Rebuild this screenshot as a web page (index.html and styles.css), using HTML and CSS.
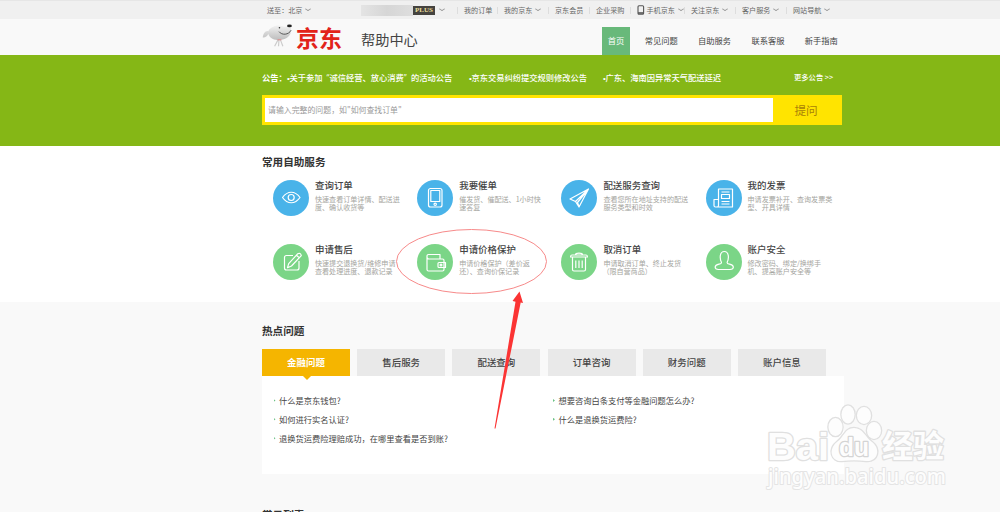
FILE: index.html
```html
<!DOCTYPE html>
<html lang="zh-CN">
<head>
<meta charset="utf-8">
<title>京东帮助中心</title>
<link rel="stylesheet" href="styles.css">
</head>
<body>
<div class="page">
  <div class="topbar">
    <div class="ship">送至：北京<i class="chev"></i></div>
    <div class="user"><span class="mask"></span><span class="plus">PLUS</span><i class="chev"></i></div>
    <ul class="toplinks">
      <li class="l1">我的订单</li>
      <li class="l2">我的京东<i class="chev"></i></li>
      <li class="l3">京东会员</li>
      <li class="l4">企业采购</li>
      <li class="l5"><svg class="phone" viewBox="0 0 8 10"><rect x="1" y=".7" width="5.6" height="8.6" rx="1" fill="none" stroke="#555" stroke-width="1.1"/><path d="M1 8h5.6" stroke="#555" stroke-width="1.6"/></svg>手机京东<i class="chev"></i></li>
      <li class="l6">关注京东<i class="chev"></i></li>
      <li class="l7">客户服务<i class="chev"></i></li>
      <li class="l8">网站导航<i class="chev"></i></li>
    </ul>
  </div>
  <header class="header">
    <svg class="dog" viewBox="0 0 34 26">
      <defs><linearGradient id="fur" x1="0" y1="0" x2="0" y2="1"><stop offset="0" stop-color="#f1f1f1"/><stop offset="1" stop-color="#bdbdbd"/></linearGradient></defs>
      <path d="M6.500 8C3.500 7 1 11 .8 14.500c2.700.2 4.500-1 5.700-3.500C8 15 12 17.500 17 17c6 0 11-2 12.500-7l.5-6C27 1.500 24 4.500 21 3 17 1 9 3 6.500 8z" fill="url(#fur)"/>
      <path d="M16.500 17l-3.500 6.500M19 17l2.500 6.500M17.500 17l-.5 6.500" stroke="#ccc" stroke-width="1.200" fill="none"/>
      <path d="M16 16.900h4" stroke="#d88" stroke-width="1"/>
      <path d="M17.500 8.500c3 4 10 3.500 12.500-1.500" stroke="#555" stroke-width="1" fill="none"/>
      <ellipse cx="28.300" cy="2.600" rx="2.500" ry="1.400" fill="#222"/><circle cx="18" cy="4.600" r=".8" fill="#333"/>
    </svg>
    <span class="brand">京东</span>
    <h1 class="title">帮助中心</h1>
    <nav class="nav"><a class="on">首页</a><a>常见问题</a><a>自助服务</a><a>联系客服</a><a>新手指南</a></nav>
  </header>
  <section class="hero">
    <div class="notice"><b>公告：</b><span class="n1"><i class="dot">•</i>关于参加<q class="lq">“</q>诚信经营、放心消费<q class="rq">”</q>的活动公告</span><span class="n2"><i class="dot">•</i>京东交易纠纷提交规则修改公告</span><span class="n3"><i class="dot">•</i>广东、海南因异常天气配送延迟</span><span class="more">更多公告 &gt;&gt;</span></div>
    <div class="search"><div class="input">请输入完整的问题，如"如何查找订单"</div><div class="ask">提问</div></div>
  </section>
  <section class="services">
    <h2 class="heading">常用自助服务</h2>
    <div class="grid">
      <div class="card"><svg class="icon blue" viewBox="0 0 36 36"><path d="M9.500 17.500c5-7 12.500-7 17.500 0-5 7-12.500 7-17.500 0z"/><circle cx="18.200" cy="17.500" r="3"/></svg><div><h3>查询订单</h3><p>快速查看订单详情、配送进<br>度、确认收货等</p></div></div>
      <div class="card"><svg class="icon blue" viewBox="0 0 36 36"><rect x="11.500" y="8.500" width="13.500" height="18.500" rx="2"/><path d="M13.800 10.500h9v11h-9z"/><circle cx="18.200" cy="24.300" r="1.200"/></svg><div><h3>我要催单</h3><p>催发货、催配送、1小时快<br>速答复</p></div></div>
      <div class="card"><svg class="icon blue" viewBox="0 0 36 36"><path d="M27.500 9L9 19l5.500 2.500 3.500 5.500zM27.500 9l-13 12.500M27.500 9L16.500 22.500l1.500 4"/></svg><div><h3>配送服务查询</h3><p>查看您所在地址支持的配送<br>服务类型和时效</p></div></div>
      <div class="card"><svg class="icon blue" viewBox="0 0 36 36"><path d="M12.500 9h14v18h-17q-1.500 0-1.500-1.500v-6h4.500zM12.500 19.500v6q0 1.500-1.500 1.500M15.500 12h8M15.500 14.500h8v4h-8zM15.500 21.500h8M15.500 24h8"/></svg><div><h3>我的发票</h3><p>申请发票补开、查询发票类<br>型、开具详情</p></div></div>
      <div class="card"><svg class="icon green" viewBox="0 0 36 36"><path d="M20 11.500h-6.500q-2 0-2 2v10.500q0 2 2 2h10.500q2 0 2-2v-7M24.800 9.700q2.700-1.200 3.500 2L18.500 22l-4 1.700 1.200-4zM23.500 11.200l2.900 2.700"/></svg><div><h3>申请售后</h3><p>快速提交退换货/维修申请<br>查看处理进度、退款记录</p></div></div>
      <div class="card"><svg class="icon green" viewBox="0 0 36 36"><path d="M10 12.500v13q0 1.500 1.500 1.500h14q1.500 0 1.500-1.500v-9q0-1.500-1.500-1.500H12q-2 0-2-2v-1q0-1.500 1.500-1.500H23V15M28.500 18.500H22q-1 0-1 1v3q0 1 1 1h6.500z"/><circle cx="24" cy="21" r=".9"/></svg><div><h3>申请价格保护</h3><p>申请价格保护（差价返<br>还）、查询价保记录</p></div></div>
      <div class="card"><svg class="icon green" viewBox="0 0 36 36"><path d="M9.500 13q0-2 1.500-2h14q1.500 0 1.500 2zM14.500 11q0-1.800 3.500-1.800t3.500 1.800M11.500 13v12.500q0 1.500 1.500 1.500h10q1.500 0 1.500-1.500V13M14.800 16.500v7.500M18 16.500v7.500M21.200 16.500v7.500"/></svg><div><h3>取消订单</h3><p>申请取消订单、终止发货<br><span class="limit">（限自营商品）</span></p></div></div>
      <div class="card"><svg class="icon green" viewBox="0 0 36 36"><path d="M15.500 18.500c-2-4-2-11 2.800-11s4.800 7 2.800 11q0 1.200 2.400 1.700c5 1 5 4.800.5 5.300h-11.500c-4.500-.5-4.500-4.300.5-5.300q2.500-.5 2.500-1.700z"/></svg><div><h3>账户安全</h3><p>修改密码、绑定/换绑手<br>机、提高账户安全等</p></div></div>
    </div>
  </section>
  <section class="hot">
    <h2 class="heading">热点问题</h2>
    <div class="tabs"><div class="tab active">金融问题</div><div class="tab">售后服务</div><div class="tab">配送查询</div><div class="tab">订单咨询</div><div class="tab">财务问题</div><div class="tab">账户信息</div></div>
    <div class="panel">
      <ul><li>什么是京东钱包?</li><li>如何进行实名认证?</li><li>退换货运费险理赔成功，在哪里查看是否到账?</li></ul>
      <ul><li>想要咨询白条支付等金融问题怎么办?</li><li>什么是退换货运费险?</li></ul>
    </div>
    <h2 class="heading last">常见列表</h2>
  </section>
  <svg class="overlay" viewBox="0 0 1000 512">
    <ellipse cx="471.500" cy="261.500" rx="75" ry="32" fill="none" stroke="#f78a8a" stroke-width="1"/>
    <path d="M519.500 291.500L523 303l-2.300-.5L495.500 428.500h-1L515.500 301.700l-3-.6z" fill="#fb3434"/>
    <g class="mark">
      <text x="767" y="460" font-size="39" textLength="62" lengthAdjust="spacingAndGlyphs" font-weight="700">Bai</text>
      <ellipse cx="835.500" cy="427" rx="7" ry="9"/><ellipse cx="848" cy="414.500" rx="6.500" ry="9"/><ellipse cx="864" cy="415.500" rx="7" ry="8.500"/><ellipse cx="874" cy="430.500" rx="7" ry="8.500"/>
      <path d="M854 428c-9 0-10 9-17 14-9 7-6 20 5 19 8-1 16-1 24 0 12 1 15-12 6-19-7-5-9-14-18-14z"/>
      <text x="839" y="456" font-size="25" textLength="30" lengthAdjust="spacingAndGlyphs" font-weight="700" class="du">du</text>
      <text x="882" y="457" font-size="31" textLength="62" lengthAdjust="spacingAndGlyphs" font-weight="700" class="cn">经验</text>
      <text x="768" y="484" font-size="21" textLength="178" lengthAdjust="spacingAndGlyphs" class="url">jingyan.baidu.com</text>
    </g>
  </svg>
</div>
</body>
</html>
```
FILE: styles.css
```css
* { box-sizing: border-box; }
body { margin: 0; font-family: "Noto Sans CJK SC", sans-serif; color: #555; background: #f9f9f9; }
h1, h2, h3, p, ul { margin: 0; padding: 0; font-weight: 400; }
ul { list-style: none; }
.page { position: relative; width: 1000px; height: 512px; overflow: hidden; white-space: nowrap; }

.topbar { height: 19px; background: #f0f0f0; border-top: 1px solid #e6e6e6; padding-left: 267px; display: flex; align-items: center; font-size: 7.1px; line-height: 18px; color: #666; }
.topbar > * { flex: none; }
.ship { width: 94px; }
.user { width: 96px; display: flex; align-items: center; }
.mask { width: 52px; height: 11px; background: linear-gradient(90deg, #e4e4e4, #d6d6d6 50%, #dedede); }
.plus { width: 22px; height: 9px; background: #45433f; color: #eadf9b; font: bold 7px/9px "Liberation Serif", serif; text-align: center; }
.user .chev { margin-left: 5px; }
.chev { display: inline-block; width: 4px; height: 4px; border: solid #999; border-width: 0 .8px .8px 0; transform: scale(1.1, .75) rotate(45deg); margin: 0 0 2px 4px; }
.toplinks { display: flex; }
.toplinks li { padding-left: 6px; border-left: 1px solid #ddd; height: 7px; line-height: 7px; }
.l1 { width: 40px; } .l2 { width: 51px; } .l3 { width: 41px; } .l4 { width: 41px; } .l5 { width: 54px; } .l6 { width: 51px; } .l7 { width: 51px; } .l8 { width: 55px; }
.toplinks .l5 { padding-left: 6px; }
.phone { width: 8px; height: 10px; margin: -3px 1.500px -2px 0; }

.header { height: 36px; background: #f9f9f9; display: flex; padding-left: 262px; }
.dog { width: 33px; height: 26px; margin-top: 4px; }
.brand { width: 65px; margin-left: 1px; padding-top: 4px; font-size: 23px; line-height: 28px; font-weight: 700; color: #e2231a; }
.title { width: 241px; font-size: 14.2px; line-height: 40px; color: #444; }
.nav { display: flex; align-items: flex-end; font-size: 8.25px; line-height: 27px; color: #444; }
.nav a { width: 53.4px; height: 28px; text-align: center; }
.nav .on { width: 28px; margin-right: 4.500px; background: #68b97a; color: #fff; }

.hero { height: 91px; background: #85b716; padding: 14px 0 0 262px; }
.notice { display: flex; height: 16px; line-height: 16px; font-size: 8.25px; color: #fff; font-weight: 500; }
.notice b { width: 25px; }
.n1 { width: 182px; } .n2 { width: 134px; } .n3 { width: 191px; }
.dot { display: inline-block; width: 2.500px; font: 8px/8px "Liberation Sans", sans-serif; }
q { quotes: none; font-family: "Open Sans", sans-serif; }
.lq { margin-left: 4px; }
.rq { margin-right: 4.500px; }
.more { font-size: 7.3px; }
.search { margin-top: 10px; width: 580px; height: 30px; background: #ffe400; padding: 3px; display: flex; }
.input { width: 508px; height: 24px; background: #fff; padding-left: 3px; font-size: 7.9px; line-height: 23px; color: #999; }
.ask { flex: 1; text-align: center; font-size: 11.6px; line-height: 25px; color: #a88208; }

.services { height: 156px; background: #fff; padding: 7px 0 0 262px; }
.heading { font-size: 10.6px; line-height: 18px; font-weight: 700; color: #333; }
.grid { display: grid; grid-template-columns: repeat(4, 144.2px); grid-auto-rows: 64px; padding: 9px 0 0 11px; }
.card { display: flex; gap: 6px; }
.icon { flex: none; width: 36px; height: 36px; border-radius: 50%; fill: none; stroke: #fff; stroke-width: 1.2; stroke-linejoin: round; margin-top: -.5px; }
.blue { background: #49b3e9; }
.green { background: #7bd587; }
.card h3 { font-size: 9.45px; line-height: 14px; height: 17px; margin-top: -2.500px; font-weight: 500; color: #444; }
.card p { font-size: 7.07px; line-height: 8.400px; color: #a5a5a0; }
.limit { margin-left: -1px; }

.hot { height: 210px; background: #f9f9f9; padding: 20px 0 0 262px; }
.tabs { display: flex; gap: 7.200px; margin-top: 9px; }
.tab { width: 88px; height: 27px; background: #e9e9e9; text-align: center; font-size: 9.45px; line-height: 27px; font-weight: 500; color: #444; }
.active { position: relative; background: #f5b500; color: #fff; font-weight: 700; }
.active::after { content: ""; position: absolute; left: 41px; top: 27px; border: 4px solid transparent; border-top-color: #f5b500; border-bottom: 0; }
.panel { width: 582px; height: 98px; background: #fff; display: flex; padding: 15px 0 0 11.500px; }
.panel ul { width: 279.500px; }
.panel li { height: 18.900px; line-height: 18.900px; font-size: 8.25px; display: flex; align-items: center; color: #444; }
.panel li::before { content: ""; width: 2px; height: 3px; background: #6cc285; clip-path: polygon(0 0, 100% 50%, 0 100%); margin-right: 3.500px; }
.last { margin-top: 31.500px; }

.overlay { position: absolute; left: 0; top: 0; width: 1000px; height: 512px; }
.mark { fill: #fdfdfd; stroke: #e0e0e0; stroke-width: 2.600; stroke-linejoin: round; paint-order: stroke; font-family: "Liberation Sans", sans-serif; }
.mark .du { stroke: #d4d4d4; }
.cn { font-family: "Noto Sans CJK SC", sans-serif; }
.url { font-family: "Noto Sans", sans-serif; font-weight: 500; stroke: #e4e4e4; stroke-width: 2; }
```
